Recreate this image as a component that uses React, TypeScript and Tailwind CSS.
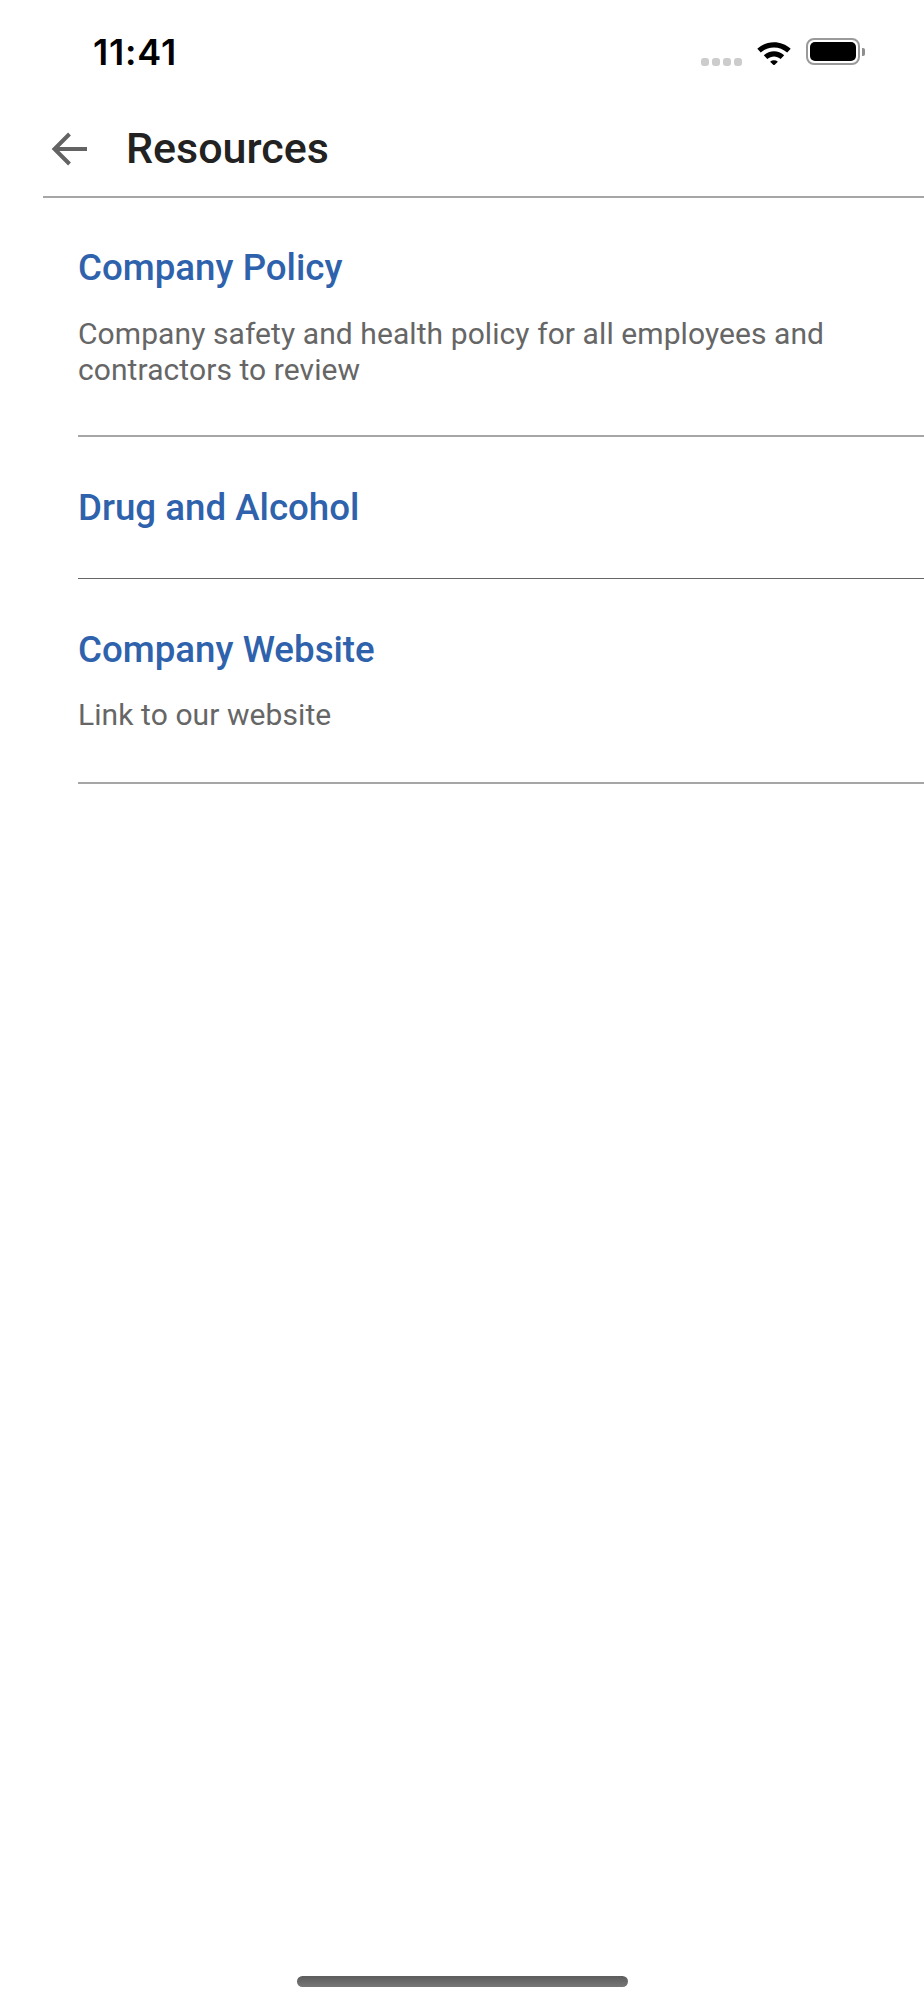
const rows = [
  { title: 'Company Policy', desc: 'Company safety and health policy for all employees and contractors to review', cls: 'h-[239px] pt-[48px] border-b-2 border-[#a6a6a6]', gap: 'mt-[26px]' },
  { title: 'Drug and Alcohol', desc: '', cls: 'h-[142px] pt-[49px] border-b border-[#666666]', gap: '' },
  { title: 'Company Website', desc: 'Link to our website', cls: 'h-[205px] pt-[49px] border-b-2 border-[#a6a6a6]', gap: 'mt-[25px]' },
];

const StatusIcons = () => (
  <div className="flex items-start">
    <div className="flex gap-[3px] mt-[20px] mr-[14px]">
      <span className="w-[8px] h-[8px] rounded-[3px] bg-[#cccccc]" />
      <span className="w-[8px] h-[8px] rounded-[3px] bg-[#cccccc]" />
      <span className="w-[8px] h-[8px] rounded-[3px] bg-[#cccccc]" />
      <span className="w-[8px] h-[8px] rounded-[3px] bg-[#cccccc]" />
    </div>
    <svg width="36" height="26" viewBox="0 0 38 28" className="mt-[1px] mr-[14px]">
      <path d="M1 10.5C11 1 27 1 37 10.5L33.2 14.6C25.2 7.2 12.8 7.2 4.8 14.6Z" fill="#000" />
      <path d="M8 17.6C14.5 11.8 23.5 11.8 30 17.6L26.2 21.6C21.8 18 16.2 18 11.8 21.6Z" fill="#000" />
      <path d="M14.8 24.4C17.4 22.4 20.6 22.4 23.2 24.4L19 28.5Z" fill="#000" />
    </svg>
    <div className="w-[54px] h-[27px] rounded-[8px] border-2 border-[#9a9a9a] p-[2px]">
      <div className="w-full h-full rounded-[5px] bg-black" />
    </div>
    <div className="w-[3px] h-[8px] mt-[10px] ml-[2px] rounded-r-[2px] bg-[#8e8e8e]" />
  </div>
);

export default function App() {
  return (
    <div className="w-[924px] h-[2000px] bg-white flex flex-col font-['Roboto',sans-serif] overflow-hidden relative">
      <div className="h-[100px] pl-[93px] pr-[59px] pt-[32px] flex justify-between items-start shrink-0">
        <span className="font-['Inter',sans-serif] font-semibold text-[36px] tracking-[0.8px] leading-[40px] text-black">11:41</span>
        <div className="mt-[6px]"><StatusIcons /></div>
      </div>

      <div className="ml-[43px] h-[98px] border-b-2 border-[#a6a6a6] flex items-center shrink-0">
        <svg width="36" height="36" viewBox="0 0 36 36" className="ml-[8px] mr-[39px] mt-[2px]" fill="none" stroke="#636363" strokeWidth="4">
          <path d="M36 18H3" />
          <path d="M18.5 3L3.5 18l15 15" />
        </svg>
        <span className="text-[43px] leading-[48px] font-medium text-[#222222]">Resources</span>
      </div>

      <div className="pl-[78px]">
        {rows.map((row) => (
          <div key={row.title} className={`${row.cls} pr-[40px]`}>
            <div className="text-[36.7px] leading-[44px] font-medium text-[#2f62ac]">{row.title}</div>
            {row.desc && (
              <div className={`${row.gap} text-[30px] tracking-[0.08px] leading-[36px] text-[#666666]`}>{row.desc}</div>
            )}
          </div>
        ))}
      </div>

      <div className="absolute left-[297px] bottom-[13px] w-[331px] h-[11px] rounded-full bg-gradient-to-b from-[#5c5c5c] to-[#777777]" />
    </div>
  );
}
